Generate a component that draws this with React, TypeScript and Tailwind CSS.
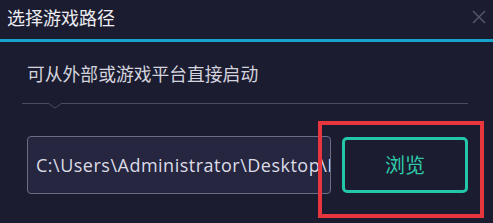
export default function App() {
  return (
    <div className="relative w-[493px] h-[223px] overflow-hidden bg-[#1c1c30] font-['Noto_Sans_CJK_SC',sans-serif]">
      {/* Header */}
      <div className="flex h-[42px] items-start justify-between border-b-[3px] border-[#18a4cc] pl-[7px] pr-[6px]">
        <span className="mt-[5px] text-[18px] leading-[24px] text-[#ececf2]">选择游戏路径</span>
        <svg className="mt-[9px]" width="16" height="16" viewBox="0 0 16 16">
          <path d="M2 2 L14 14 M14 2 L2 14" stroke="#55556a" strokeWidth="1.5" />
        </svg>
      </div>

      {/* Body */}
      <div className="px-[22px]">
        <div className="pl-[5px] pt-[19px] text-[17.8px] leading-[24px] text-[#d4d4de]">可从外部或游戏平台直接启动</div>

        <div className="relative mt-[18px] h-px w-[446px] bg-[#4a4a62]">
          <svg className="absolute left-[26px] top-0" width="14" height="6" viewBox="0 0 14 6">
            <path d="M0 0 L7 5 L14 0" fill="#1c1c30" stroke="#4a4a62" strokeWidth="1" />
          </svg>
        </div>

        <div className="ml-[5px] mt-[32px] flex items-center gap-[11px]">
          <div className="flex h-[58px] w-[304px] items-center overflow-hidden whitespace-nowrap rounded-[4px] border-[1.5px] border-[#6c6c84] bg-[#262640] pl-[8px] font-['Open_Sans','Liberation_Sans',sans-serif] text-[18px] tracking-[0.5px] text-[#dcdce6]">
            C:\Users\Administrator\Desktop\Epic Games
          </div>
          <button className="flex h-[56px] w-[126px] items-center justify-center rounded-[5px] border-[3px] border-[#24c6aa] text-[20px] text-[#2ccaa8]">
            浏览
          </button>
        </div>
      </div>

      {/* Red annotation */}
      <div className="absolute left-[318px] top-[121px] h-[97px] w-[166px] border-[4px] border-[#e8363e]" />
    </div>
  );
}
